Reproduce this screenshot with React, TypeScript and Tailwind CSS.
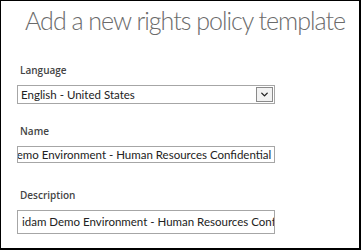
import { ChevronDown } from 'lucide-react'

const fields = [
  { label: 'Name', value: 'Demo Environment - Human Resources Confidential', gap: 'mt-[20px]', shift: '-ml-[14px]', tall: false },
  { label: 'Description', value: 'idam Demo Environment - Human Resources Confidential', gap: 'mt-[25px]', shift: '', tall: true },
]

export default function App() {
  return (
    <div className="w-[361px] h-[250px] bg-white border-t border-l border-r-2 border-b-2 border-black font-['Lato',sans-serif]">
      <h1 className="pl-[24px] pt-[5px] whitespace-nowrap text-[25px] leading-[28px] font-light tracking-[-1px] text-[#6b6b6b]">
        Add a new rights policy template
      </h1>

      <div className="px-[16px] pt-[29px]">
        <label className="block pl-[3px] font-['Open_Sans',sans-serif] text-[10px] leading-[14px] font-semibold text-[#444444]">
          Language
        </label>
        <div className="mt-[8px] flex h-[19px] w-[258px] items-stretch border border-[#a6a6a6] p-px">
          <span className="flex-1 pl-[2px] text-[11.5px] leading-[15px] text-[#222222] whitespace-nowrap">
            English - United States
          </span>
          <span className="flex w-[17px] items-center justify-center border border-[#8a8a8a] bg-[#f2f2f2]">
            <ChevronDown className="h-[11px] w-[11px] text-[#222222]" strokeWidth={3} />
          </span>
        </div>

        {fields.map(f => (
          <div key={f.label} className={f.gap}>
            <label className="block pl-[3px] font-['Open_Sans',sans-serif] text-[10px] leading-[14px] font-semibold text-[#444444]">
              {f.label}
            </label>
            <div
              className={`mt-[8px] w-[258px] overflow-hidden border border-[#a6a6a6] pl-[4px] ${f.tall ? 'h-[24px] pt-[3px]' : 'h-[17px]'}`}
            >
              <div className={`whitespace-nowrap text-[11.5px] leading-[15px] text-[#222222] ${f.shift}`}>{f.value}</div>
            </div>
          </div>
        ))}
      </div>
    </div>
  )
}
